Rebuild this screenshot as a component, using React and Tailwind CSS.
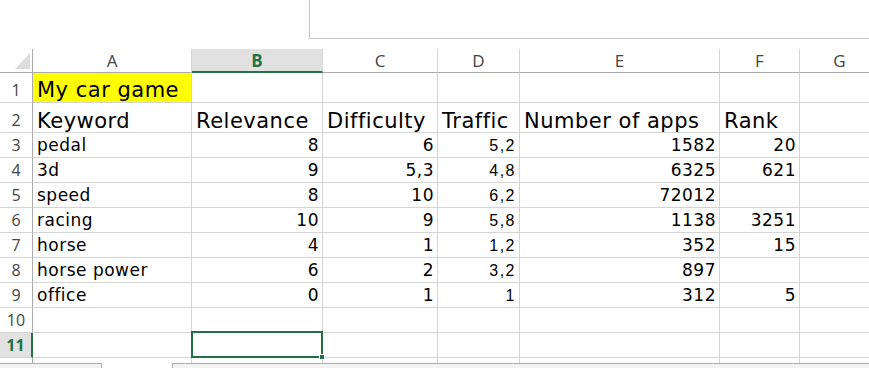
import React from 'react';

const cols = [
  { key: 'A', w: 'w-[159px]' },
  { key: 'B', w: 'w-[131px]' },
  { key: 'C', w: 'w-[115px]' },
  { key: 'D', w: 'w-[82px]' },
  { key: 'E', w: 'w-[200px]' },
  { key: 'F', w: 'w-[80px]' },
  { key: 'G', w: 'w-[80px]' },
];

const rows = [
  ['pedal', '8', '6', '5,2', '1582', '20'],
  ['3d', '9', '5,3', '4,8', '6325', '621'],
  ['speed', '8', '10', '6,2', '72012', ''],
  ['racing', '10', '9', '5,8', '1138', '3251'],
  ['horse', '4', '1', '1,2', '352', '15'],
  ['horse power', '6', '2', '3,2', '897', ''],
  ['office', '0', '1', '1', '312', '5'],
];

const headers = ['Keyword', 'Relevance', 'Difficulty', 'Traffic', 'Number of apps', 'Rank'];

const cellFont = { fontFamily: '"DejaVu Sans", sans-serif' };
const uiFont = { fontFamily: '"Open Sans", sans-serif' };
const smallFont = { fontFamily: '"Liberation Sans", sans-serif' };

const RowNum = ({ n, h, active }) => (
  <div
    className={`w-[33px] shrink-0 flex items-end justify-center pb-[4px] text-[16px] leading-none border-b border-b-[#d4d4d4] ${h} ${
      active ? 'bg-[#e1e1e1] text-[#217346] font-bold border-r-2 border-r-[#217346]' : 'text-[#444] border-r border-r-[#ababab]'
    }`}
    style={uiFont}
  >
    {n}
  </div>
);

const Cell = ({ w, h, children, className = '' }) => (
  <div className={`${w} ${h} shrink-0 border-r border-b border-[#d4d4d4] flex items-end overflow-hidden whitespace-nowrap ${className}`}>
    {children}
  </div>
);

export default function App() {
  return (
    <div className="w-[869px] h-[368px] overflow-hidden bg-white text-black relative">
      {/* formula bar remnant */}
      <div className="h-[49px]">
        <div className="ml-[309px] h-[39px] border-l border-b border-[#c6c6c6]" />
      </div>

      {/* column headers */}
      <div className="flex h-[24px]">
        <div className="w-[33px] shrink-0 border-r border-r-[#ababab] border-b border-b-[#ababab] relative">
          <svg className="absolute left-[15px] top-[4px]" width="15" height="16" viewBox="0 0 15 16">
            <polygon points="15,0 15,16 0,16" fill="#dcdcdc" />
          </svg>
        </div>
        {cols.map((c) => (
          <div
            key={c.key}
            className={`${c.w} shrink-0 flex items-center justify-center text-[17px] leading-none border-r border-r-[#d4d4d4] ${
              c.key === 'B'
                ? 'bg-[#e1e1e1] text-[#217346] font-bold border-b-2 border-b-[#217346]'
                : 'text-[#444] border-b border-b-[#ababab]'
            }`}
            style={uiFont}
          >
            {c.key}
          </div>
        ))}
      </div>

      {/* row 1 */}
      <div className="flex">
        <RowNum n="1" h="h-[30px]" />
        <Cell w={cols[0].w} h="h-[30px]" className="bg-[#ffff00] pl-[4px] pb-[1px] text-[21px] leading-none tracking-[0.5px]">
          <span style={cellFont}>My car game</span>
        </Cell>
        {cols.slice(1).map((c) => (
          <Cell key={c.key} w={c.w} h="h-[30px]" />
        ))}
      </div>

      {/* row 2 */}
      <div className="flex">
        <RowNum n="2" h="h-[30px]" />
        {cols.map((c, i) => (
          <Cell key={c.key} w={c.w} h="h-[30px]" className="pl-[4px] pb-[0px] text-[21px] leading-none tracking-[0.5px]">
            <span style={cellFont}>{headers[i] || ''}</span>
          </Cell>
        ))}
      </div>

      {/* data rows */}
      {rows.map((r, ri) => (
        <div key={ri} className="flex">
          <RowNum n={ri + 3} h="h-[25px]" />
          <Cell w={cols[0].w} h="h-[25px]" className="pl-[4px] pb-[3px] text-[17px] leading-none tracking-[0.5px]">
            <span style={cellFont}>{r[0]}</span>
          </Cell>
          {cols.slice(1).map((c, ci) => {
            const v = r[ci + 1] || '';
            if (c.key === 'D') {
              return (
                <Cell key={c.key} w={c.w} h="h-[25px]" className="justify-end pr-[3px] pb-[3px] text-[16px] leading-none tracking-[1.5px]">
                  <span style={smallFont}>{v}</span>
                </Cell>
              );
            }
            return (
              <Cell key={c.key} w={c.w} h="h-[25px]" className="justify-end pr-[3px] pb-[3px] text-[17px] leading-none tracking-[0.5px]">
                <span style={cellFont}>{v}</span>
              </Cell>
            );
          })}
        </div>
      ))}

      {/* row 10 */}
      <div className="flex">
        <RowNum n="10" h="h-[25px]" />
        {cols.map((c) => (
          <Cell key={c.key} w={c.w} h="h-[25px]" />
        ))}
      </div>

      {/* row 11 with selected B11 */}
      <div className="flex">
        <RowNum n="11" h="h-[25px]" active />
        {cols.map((c) => (
          <Cell key={c.key} w={c.w} h="h-[25px]" className={c.key === 'B' ? 'relative overflow-visible' : ''}>
            {c.key === 'B' && (
              <div className="absolute left-[-1px] top-[-2px] right-[-1px] bottom-[-1px] border-2 border-[#217346]">
                <div className="absolute right-[-4px] bottom-[-4px] w-[6px] h-[6px] bg-[#217346] border border-white" />
              </div>
            )}
          </Cell>
        ))}
      </div>

      {/* partial row 12 */}
      <div className="flex h-[5px]">
        <div className="w-[33px] shrink-0 border-r border-r-[#ababab]" />
        {cols.map((c) => (
          <div key={c.key} className={`${c.w} shrink-0 border-r border-[#d4d4d4]`} />
        ))}
      </div>

      {/* sheet tab bar */}
      <div className="flex h-[10px]">
        <div className="w-[102px] border-t border-r border-[#ababab] bg-[#f3f3f3]" />
        <div className="w-[70px] bg-white" />
        <div className="flex-1 border-t border-l border-[#ababab] bg-[#f3f3f3]" />
      </div>
    </div>
  );
}
